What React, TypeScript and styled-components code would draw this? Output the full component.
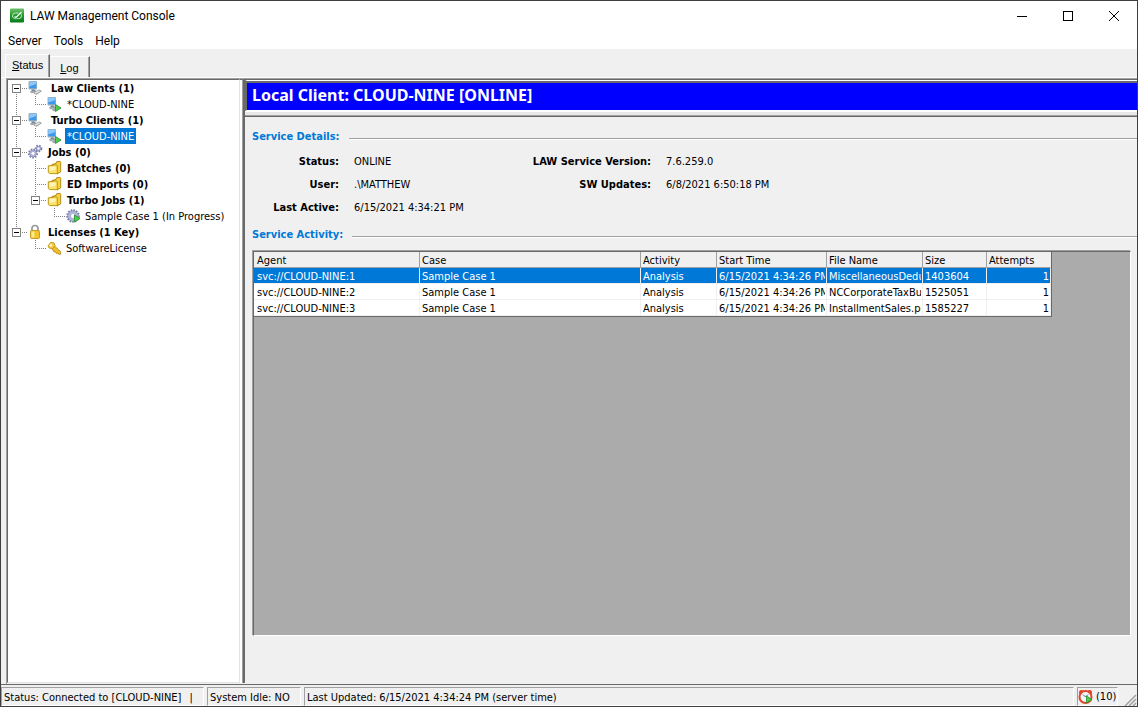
import React from "react";
import styled, { createGlobalStyle, css } from "styled-components";

const GlobalStyle = createGlobalStyle`
  *, *::before, *::after { box-sizing: border-box; }
  html, body { margin: 0; padding: 0; }
  body { background: #f0f0f0; }
  button, a, table { font: inherit; color: inherit; }
`;

const uiFont = `"DejaVu Sans Condensed", "Open Sans", sans-serif`;
const systemFont = `Roboto, "Open Sans", sans-serif`;
const bannerFont = `"Noto Sans", "Open Sans", sans-serif`;
const tabFont = `"Liberation Sans", Arial, sans-serif`;

/* ---------- window chrome ---------- */

const Window = styled.div`
  display: flex;
  flex-direction: column;
  min-height: 100vh;
  border: 1px solid #3f3f42;
  background: #f0f0f0;
  color: #000;
  font: 11px/16px ${uiFont};
`;

const TitleBar = styled.header`
  display: flex;
  align-items: center;
  height: 30px;
  padding-left: 8px;
  background: #fff;
  font: 12px/16px ${systemFont};
`;

const Title = styled.h1`
  flex: 1;
  margin: 0 0 0 5px;
  font: inherit;
`;

const WindowButton = styled.button`
  display: grid;
  place-items: center;
  width: 46px;
  height: 30px;
  padding: 0;
  border: 0;
  background: none;
`;

const MenuBar = styled.nav`
  display: flex;
  gap: 12px;
  height: 18px;
  padding-left: 7px;
  background: #fff;
  font: 12px/20px ${systemFont};
`;

const MenuItem = styled.button`
  padding: 0;
  border: 0;
  background: none;
`;

const TabStrip = styled.div`
  display: flex;
  align-items: flex-end;
  height: 29px;
  padding-left: 4px;
  border-bottom: 1px solid #fff;
  font: 11px/16px ${tabFont};
`;

const Tab = styled.button<{ $active?: boolean }>`
  height: ${(p) => (p.$active ? 23 : 21)}px;
  padding: ${(p) => (p.$active ? "0 6px 2px" : "2px 10px 0")};
  border: 0;
  border-top: 1px solid #fff;
  border-left: ${(p) => (p.$active ? "1px solid #fff" : 0)};
  border-right: 1px solid #696969;
  box-shadow: inset -1px 0 #a0a0a0;
  background: #f0f0f0;
  &::first-letter { text-decoration: underline; }
`;

/* ---------- main split ---------- */

const Split = styled.main`
  display: flex;
  flex: 1;
  margin-left: 5px;
  padding-bottom: 1px;
  border-top: 1px solid #a0a0a0;
  border-left: 1px solid #a0a0a0;
`;

const TreePane = styled.section`
  flex: none;
  width: 233px;
  border-top: 1px solid #696969;
  border-left: 1px solid #696969;
  border-right: 1px solid #e3e3e3;
  border-bottom: 1px solid #e3e3e3;
  background: #fff;
`;

const Splitter = styled.div`
  flex: none;
  width: 3px;
  border-top: 1px solid #696969;
  border-right: 1px solid #a0a0a0;
  background: #fff;
`;

const DetailPane = styled.section`
  display: flex;
  flex: 1;
  flex-direction: column;
  min-width: 0;
  border-top: 1px solid #696969;
  border-left: 2px solid #696969;
`;

/* ---------- tree ---------- */

const TreeList = styled.ul`
  margin: 0;
  padding: 0;
  list-style: none;
`;

const TreeRow = styled.div`
  display: flex;
  align-items: center;
  height: 16px;
`;

const vDots = "repeating-linear-gradient(to bottom, #808080 0 1px, transparent 1px 2px)";
const hDots = "repeating-linear-gradient(to right, #808080 0 1px, transparent 1px 2px)";

type GuideKind = "none" | "pass" | "tee" | "elbow" | "start";

const Guide = styled.span<{ $kind: GuideKind }>`
  display: flex;
  flex: none;
  align-items: center;
  width: 19px;
  height: 16px;
  padding-left: 4px;
  background-repeat: no-repeat;
  ${(p) =>
    p.$kind === "pass" &&
    css`
      background-image: ${vDots};
      background-size: 1px 16px;
      background-position: 8px 0;
    `}
  ${(p) =>
    (p.$kind === "tee" || p.$kind === "elbow" || p.$kind === "start") &&
    css`
      background-image: ${vDots}, ${hDots};
      background-size: 1px ${p.$kind === "tee" ? 16 : 8}px, 11px 1px;
      background-position: 8px ${p.$kind === "start" ? 8 : 0}px, 8px 8px;
    `}
`;

const Expander = styled.button`
  display: grid;
  place-items: center;
  width: 9px;
  height: 9px;
  margin-top: 1px;
  padding: 0;
  border: 1px solid #808080;
  background: #fff;
  &::after {
    content: "";
    width: 5px;
    height: 1px;
    background: #000;
  }
`;

const IconSlot = styled.span`
  display: flex;
  flex: none;
  width: 16px;
  height: 16px;
  margin-left: 1px;
`;

const TreeLabel = styled.span<{ $bold?: boolean; $selected?: boolean; $gap: number }>`
  height: 16px;
  margin-left: ${(p) => p.$gap}px;
  padding: 1px 2px 0;
  font-weight: ${(p) => (p.$bold ? 700 : 400)};
  line-height: 15px;
  white-space: nowrap;
  ${(p) => p.$selected && "background: #0078d7; color: #fff;"}
`;

/* ---------- detail pane ---------- */

const Banner = styled.h2`
  margin: 0;
  padding: 0 5px;
  height: 31px;
  border-top: 1px solid #fff;
  border-left: 2px solid #696969;
  border-bottom: 1px solid #fff;
  box-shadow: inset 0 2px #696969;
  background: #00f;
  color: #fff;
  font: bold 16px/29px ${bannerFont};
`;

const BannerRule = styled.div`
  height: 6px;
  border-top: 1px solid #fff;
  border-bottom: 1px solid #696969;
  box-shadow: inset 0 -1px #a0a0a0;
  background: #e8e8e8;
`;

const SectionHeading = styled.h3`
  display: flex;
  align-items: center;
  gap: 9px;
  margin: 0;
  color: #0078d7;
  font: bold 11px/16px ${uiFont};
  &::after {
    content: "";
    flex: 1;
    height: 2px;
    margin-top: 4px;
    border-top: 1px solid #a0a0a0;
    border-bottom: 1px solid #fff;
  }
`;

const Details = styled.div`
  padding: 12px 0 0 7px;
`;

const Facts = styled.dl`
  display: grid;
  grid-template-columns: 87px 159px 123px 1fr;
  grid-auto-rows: 16px;
  gap: 7px 15px;
  margin: 9px 0 11px;
`;

const FactName = styled.dt<{ $column: number }>`
  grid-column: ${(p) => p.$column};
  font-weight: 700;
  text-align: right;
  white-space: nowrap;
`;

const FactValue = styled.dd`
  margin: 0;
  white-space: nowrap;
`;

const GridArea = styled.div`
  flex: 1;
  margin: 8px 6px 47px 8px;
  border: 1px solid #696969;
  border-right-color: #fff;
  border-bottom-color: #fff;
  box-shadow: -1px -1px 0 #a0a0a0;
  background: #ababab;
  overflow: hidden;
`;

const ActivityTable = styled.table`
  width: 798px;
  table-layout: fixed;
  border-collapse: separate;
  border-spacing: 0;
  border-right: 1px solid #696969;
  border-bottom: 1px solid #696969;
  background: #fff;
`;

const HeaderCell = styled.th`
  height: 16px;
  padding: 2px 2px 0;
  border-right: 1px solid #a0a0a0;
  border-bottom: 1px solid #a0a0a0;
  background: #f0f0f0;
  font-weight: 400;
  line-height: 13px;
  text-align: left;
  &:first-child { padding-left: 3px; }
  &:last-child { border-right-color: #f0f0f0; }
`;

const Cell = styled.td<{ $align?: "right" }>`
  height: 16px;
  padding: 2px 1px 0 2px;
  border-right: 1px solid #f0f0f0;
  border-bottom: 1px solid #f0f0f0;
  text-align: ${(p) => p.$align ?? "left"};
  &:first-child { padding-left: 3px; }
`;

const CellText = styled.div`
  height: 13px;
  line-height: 13px;
  overflow: hidden;
  white-space: nowrap;
`;

const Row = styled.tr<{ $selected?: boolean }>`
  ${(p) => p.$selected && "background: #0078d7; color: #fff;"}
`;

/* ---------- status bar ---------- */

const StatusBar = styled.footer`
  display: flex;
  gap: 3px;
  height: 22px;
  padding-top: 2px;
  border-top: 1px solid #696969;
`;

const StatusPanel = styled.div<{ $width?: number }>`
  display: flex;
  align-items: center;
  gap: 2px;
  flex: ${(p) => (p.$width ? `0 0 ${p.$width}px` : "1")};
  padding: 2px 0 0 2px;
  border: 1px solid #a0a0a0;
  border-right-color: #fff;
  border-bottom-color: #fff;
  white-space: nowrap;
`;

const AlertPanel = styled(StatusPanel)`
  padding: 1px 0 0;
`;

const Caret = styled.span`
  margin-left: 6px;
`;

/* ---------- icons ---------- */

const AppIcon = () => (
  <svg width="16" height="16" viewBox="0 0 16 16" aria-hidden="true">
    <defs>
      <linearGradient id="appGreen" x1="0" y1="0" x2="0" y2="1">
        <stop offset="0" stopColor="#6fbf6a" />
        <stop offset="0.5" stopColor="#1f9a2c" />
        <stop offset="1" stopColor="#0b7a1c" />
      </linearGradient>
    </defs>
    <rect x="1" y="0.500" width="14" height="14" rx="1" fill="url(#appGreen)" />
    <path d="M9.500 5H6.500A3 3 0 0 0 3.500 8c0 1.700 1.300 2.700 2.800 2.700h1.200" fill="none" stroke="#bfe6bf" strokeWidth="1" />
    <path d="M8 10.700h1.500A3 3 0 0 0 12.500 7.500c0-.8-.2-1.300-.6-1.800" fill="none" stroke="#bfe6bf" strokeWidth="1" />
    <path d="M5.500 8.500l1.500 1L12.500 4" fill="none" stroke="#fff" strokeWidth="1.200" />
  </svg>
);

const Monitor = () => (
  <>
    <rect x="0.500" y="1" width="8.500" height="8.500" rx="1" fill="#9fb0bf" />
    <rect x="1.300" y="1.800" width="7" height="6.500" fill="#3c98ea" />
    <path d="M1.300 1.800h7v2.200l-7 2.500z" fill="#8cc8f8" />
    <path d="M3.500 9.500h3.500l.5 1.500h-4z" fill="#7f858b" />
    <path d="M1.500 11.500l6.500-1 1 1-5.500 1.800z" fill="#9aa1a8" />
  </>
);

const ClientsIcon = () => (
  <svg width="16" height="16" viewBox="0 0 16 16" aria-hidden="true">
    <Monitor />
    <path d="M5 13l6-3.500 3 1.500-5.500 3.700z" fill="#8f959b" />
    <path d="M6.200 12.800l4.700-2.600 1.700.7-4.500 2.800z" fill="#e3e7ea" />
  </svg>
);

const Play = ({ y }: { y: number }) => (
  <path d={`M8.500 ${y}l5.500 3.500-5.500 3.500z`} fill="#4bd044" stroke="#1f8f24" strokeWidth="0.800" />
);

const ClientIcon = () => (
  <svg width="16" height="16" viewBox="0 0 16 16" aria-hidden="true">
    <Monitor />
    <path d="M4.500 13.500l4-2.500v4l-2 .3z" fill="#a4a9af" />
    <Play y={8.5} />
  </svg>
);

const FolderIcon = () => (
  <svg width="16" height="16" viewBox="0 0 16 16" aria-hidden="true">
    <path d="M5 4.500L9 3.500l.5-1.700 3.500-.5.700 1v9.500L10 14z" fill="#f6d23c" stroke="#a97f0c" strokeWidth="0.900" />
    <path d="M1.300 5.800L9.500 4.800 10.300 6v7.700L2.500 13.500 1.300 12.500z" fill="#fbe36a" stroke="#b98c12" strokeWidth="0.900" />
    <path d="M2.500 7l6-.6v3.200l-6 1.500z" fill="#fef4b4" />
  </svg>
);

const Cog = ({ x, y, r }: { x: number; y: number; r: number }) => (
  <g transform={`translate(${x} ${y})`}>
    <circle r={r - 1} fill="none" stroke="#767aa8" strokeWidth="2" strokeDasharray="1.500 1.200" />
    <circle r={r - 1.5} fill="#b3b6d8" stroke="#8286b4" strokeWidth="0.700" />
    <circle r={r / 3.5} fill="#fff" />
  </g>
);

const JobsIcon = () => (
  <svg width="16" height="16" viewBox="0 0 16 16" aria-hidden="true">
    <Cog x={10.5} y={4.5} r={3.8} />
    <Cog x={5} y={9.5} r={5} />
  </svg>
);

const JobIcon = () => (
  <svg width="16" height="16" viewBox="0 0 16 16" aria-hidden="true">
    <Cog x={7} y={8} r={6.8} />
    <Play y={7} />
  </svg>
);

const LockIcon = () => (
  <svg width="16" height="16" viewBox="0 0 16 16" aria-hidden="true">
    <path d="M4 8V4.500a3 3 0 0 1 6 0V8" fill="none" stroke="#9a9a9a" strokeWidth="1.700" />
    <rect x="2.500" y="6.500" width="9" height="8" rx="1" fill="#f5c527" stroke="#b98a10" strokeWidth="0.800" />
    <rect x="3.500" y="7.500" width="3" height="6" fill="#fde98a" />
  </svg>
);

const KeyIcon = () => (
  <svg width="16" height="16" viewBox="0 0 16 16" aria-hidden="true">
    <path d="M7 5.500l6.500 6 .3 2.500-2 .5-1-1.500-1.500.5-.8-1.800-1.500.3L5 8.500z" fill="#f0bf2a" stroke="#a97808" strokeWidth="0.700" />
    <path d="M1 6l2.500-3.500 3.500.3L8 5.500 5.500 8.800 2 8z" fill="#f8cf3c" stroke="#b98a10" strokeWidth="0.800" />
    <circle cx="3.800" cy="5.300" r="1.100" fill="#fff" />
  </svg>
);

const ClockIcon = () => (
  <svg width="16" height="16" viewBox="0 0 16 16" aria-hidden="true">
    <circle cx="3.500" cy="3.500" r="2.500" fill="#e5402a" />
    <circle cx="11.500" cy="3.500" r="2.500" fill="#e5402a" />
    <circle cx="7.500" cy="8" r="6" fill="#eef5fb" stroke="#e0452c" strokeWidth="2" />
    <path d="M5 5.500l2.500 2.500L10 5.500" fill="none" stroke="#55697c" strokeWidth="1" />
    <Play y={7} />
  </svg>
);

const GripIcon = styled.svg`
  align-self: flex-end;
`;

const Grip = () => (
  <GripIcon width="16" height="13" viewBox="0 0 16 13" aria-hidden="true">
    <path d="M4 13L15 2M8 13l7-7M12 13l3-3" stroke="#a0a0a0" strokeWidth="1.500" />
  </GripIcon>
);

/* ---------- data ---------- */

interface TreeNode {
  label: string;
  guides: GuideKind[];
  Icon: () => React.ReactElement;
  gap: number;
  expandable?: boolean;
  bold?: boolean;
  selected?: boolean;
}

const nodes: TreeNode[] = [
  { label: "Law Clients (1)", guides: ["start"], Icon: ClientsIcon, gap: 5, expandable: true, bold: true },
  { label: "*CLOUD-NINE", guides: ["pass", "elbow"], Icon: ClientIcon, gap: 2 },
  { label: "Turbo Clients (1)", guides: ["tee"], Icon: ClientsIcon, gap: 5, expandable: true, bold: true },
  { label: "*CLOUD-NINE", guides: ["pass", "elbow"], Icon: ClientIcon, gap: 2, selected: true },
  { label: "Jobs (0)", guides: ["tee"], Icon: JobsIcon, gap: 2, expandable: true, bold: true },
  { label: "Batches (0)", guides: ["pass", "tee"], Icon: FolderIcon, gap: 2, bold: true },
  { label: "ED Imports (0)", guides: ["pass", "tee"], Icon: FolderIcon, gap: 2, bold: true },
  { label: "Turbo Jobs (1)", guides: ["pass", "elbow"], Icon: FolderIcon, gap: 2, expandable: true, bold: true },
  { label: "Sample Case 1 (In Progress)", guides: ["pass", "none", "elbow"], Icon: JobIcon, gap: 1 },
  { label: "Licenses (1 Key)", guides: ["elbow"], Icon: LockIcon, gap: 2, expandable: true, bold: true },
  { label: "SoftwareLicense", guides: ["none", "elbow"], Icon: KeyIcon, gap: 1 },
];

const columns = [
  { name: "Agent", width: 166 },
  { name: "Case", width: 221 },
  { name: "Activity", width: 76 },
  { name: "Start Time", width: 110 },
  { name: "File Name", width: 96 },
  { name: "Size", width: 64 },
  { name: "Attempts", width: 64 },
];

const rows = [
  ["svc://CLOUD-NINE:1", "Sample Case 1", "Analysis", "6/15/2021 4:34:26 PM", "MiscellaneousDedu", "1403604", "1"],
  ["svc://CLOUD-NINE:2", "Sample Case 1", "Analysis", "6/15/2021 4:34:26 PM", "NCCorporateTaxBu", "1525051", "1"],
  ["svc://CLOUD-NINE:3", "Sample Case 1", "Analysis", "6/15/2021 4:34:26 PM", "InstallmentSales.pd", "1585227", "1"],
];

export default function App() {
  return (
    <>
      <GlobalStyle />
      <Window>
        <TitleBar>
          <AppIcon />
          <Title>LAW Management Console</Title>
          <WindowButton aria-label="Minimize">
            <svg width="10" height="10"><path d="M0 5.500h10" stroke="#000" /></svg>
          </WindowButton>
          <WindowButton aria-label="Maximize">
            <svg width="10" height="10"><rect x="0.500" y="0.500" width="9" height="9" fill="none" stroke="#000" /></svg>
          </WindowButton>
          <WindowButton aria-label="Close">
            <svg width="10" height="10"><path d="M0 0l10 10M10 0L0 10" stroke="#000" /></svg>
          </WindowButton>
        </TitleBar>
        <MenuBar>
          <MenuItem>Server</MenuItem>
          <MenuItem>Tools</MenuItem>
          <MenuItem>Help</MenuItem>
        </MenuBar>
        <TabStrip role="tablist">
          <Tab role="tab" aria-selected="true" $active>Status</Tab>
          <Tab role="tab" aria-selected="false">Log</Tab>
        </TabStrip>
        <Split>
          <TreePane>
            <TreeList>
              {nodes.map(({ Icon, ...node }, i) => (
                <li key={i}>
                  <TreeRow>
                    {node.guides.map((kind, level) => (
                      <Guide key={level} $kind={kind}>
                        {node.expandable && level === node.guides.length - 1 && (
                          <Expander aria-label={`Collapse ${node.label}`} />
                        )}
                      </Guide>
                    ))}
                    <IconSlot><Icon /></IconSlot>
                    <TreeLabel $gap={node.gap} $bold={node.bold} $selected={node.selected}>
                      {node.label}
                    </TreeLabel>
                  </TreeRow>
                </li>
              ))}
            </TreeList>
          </TreePane>
          <Splitter role="separator" aria-orientation="vertical" />
          <DetailPane>
            <Banner>Local Client: CLOUD-NINE [ONLINE]</Banner>
            <BannerRule />
            <Details>
              <SectionHeading>Service Details:</SectionHeading>
              <Facts>
                <FactName $column={1}>Status:</FactName>
                <FactValue>ONLINE</FactValue>
                <FactName $column={3}>LAW Service Version:</FactName>
                <FactValue>7.6.259.0</FactValue>
                <FactName $column={1}>User:</FactName>
                <FactValue>.\MATTHEW</FactValue>
                <FactName $column={3}>SW Updates:</FactName>
                <FactValue>6/8/2021 6:50:18 PM</FactValue>
                <FactName $column={1}>Last Active:</FactName>
                <FactValue>6/15/2021 4:34:21 PM</FactValue>
              </Facts>
              <SectionHeading>Service Activity:</SectionHeading>
            </Details>
            <GridArea>
              <ActivityTable>
                <colgroup>
                  {columns.map((c) => <col key={c.name} width={c.width} />)}
                </colgroup>
                <thead>
                  <tr>{columns.map((c) => <HeaderCell key={c.name} scope="col">{c.name}</HeaderCell>)}</tr>
                </thead>
                <tbody>
                  {rows.map((row, r) => (
                    <Row key={r} $selected={r === 0}>
                      {row.map((value, c) => (
                        <Cell key={c} $align={c === 6 ? "right" : undefined}>
                          <CellText>{value}</CellText>
                        </Cell>
                      ))}
                    </Row>
                  ))}
                </tbody>
              </ActivityTable>
            </GridArea>
          </DetailPane>
        </Split>
        <StatusBar>
          <StatusPanel $width={203}>Status: Connected to [CLOUD-NINE]<Caret>|</Caret></StatusPanel>
          <StatusPanel $width={94}>System Idle: NO</StatusPanel>
          <StatusPanel>Last Updated: 6/15/2021 4:34:24 PM (server time)</StatusPanel>
          <AlertPanel $width={41}><ClockIcon />(10)</AlertPanel>
          <Grip />
        </StatusBar>
      </Window>
    </>
  );
}
